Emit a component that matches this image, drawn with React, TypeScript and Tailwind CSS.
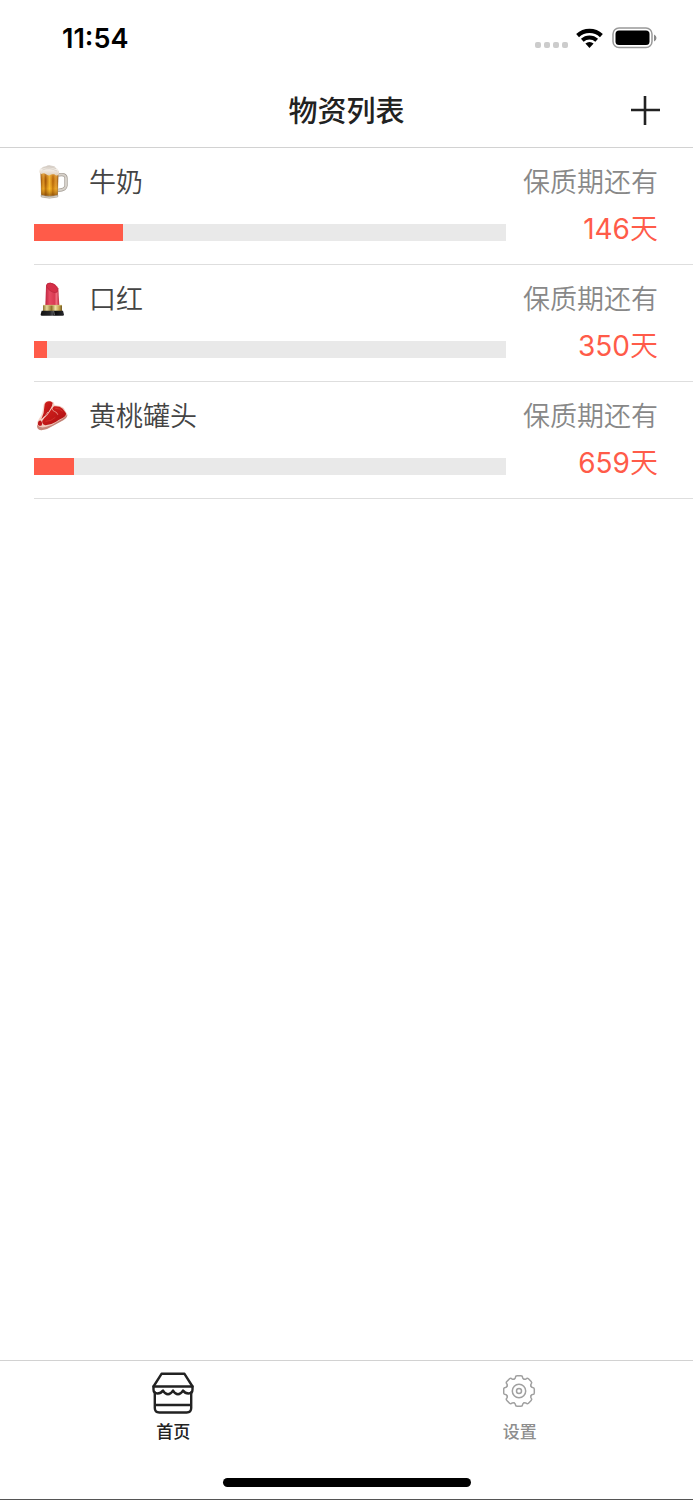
import React from 'react'

function BeerIcon() {
  return (
    <svg viewBox="42 27 114 108" className="h-9 w-[38px] shrink-0" aria-hidden="true">
      <defs>
        <linearGradient id="beer" x1="0" x2="1">
          <stop offset="0" stopColor="#8f4a08" />
          <stop offset=".14" stopColor="#e09a2c" />
          <stop offset=".28" stopColor="#a85a08" />
          <stop offset=".5" stopColor="#f7bb35" />
          <stop offset=".7" stopColor="#c06c0a" />
          <stop offset=".88" stopColor="#e2a03a" />
          <stop offset="1" stopColor="#8a4a10" />
        </linearGradient>
        <linearGradient id="beerShade" x1="0" x2="0" y1="0" y2="1">
          <stop offset="0" stopColor="#ffd98a" stopOpacity=".55" />
          <stop offset=".35" stopColor="#c87410" stopOpacity=".1" />
          <stop offset=".7" stopColor="#ffbe20" stopOpacity=".35" />
          <stop offset="1" stopColor="#6d3906" stopOpacity=".6" />
        </linearGradient>
        <linearGradient id="foam" x1="0" x2="0" y1="0" y2="1">
          <stop offset="0" stopColor="#cfc6be" />
          <stop offset=".4" stopColor="#f3eee8" />
          <stop offset="1" stopColor="#e0cfbc" />
        </linearGradient>
      </defs>
      <path d="M113 60 Q137 55 138 69 V92 Q137 105 114 106" fill="none" stroke="#a39c94" strokeWidth="10" />
      <path d="M113 60 Q137 55 138 69 V92 Q137 105 114 106" fill="none" stroke="#d6d1ca" strokeWidth="6" />
      <path d="M61 48 H116 L114 123 Q88 133 63 123 Z" fill="#c8b8a2" />
      <path d="M62 50 H115 L113 119 Q88 126 64 119 Z" fill="url(#beer)" />
      <path d="M62 50 H115 L113 119 Q88 126 64 119 Z" fill="url(#beerShade)" />
      <path d="M77 62 L78 119 M99 62 L98 119" stroke="#8b4908" strokeWidth="2" opacity=".4" />
      <path d="M63 121 Q88 129 114 121 L113 126 Q88 133 64 126 Z" fill="#e4dccf" stroke="#90877a" strokeWidth="1.5" />
      <path d="M58 50 Q57 42 65 39 Q69 34 78 34 Q84 29 95 32 Q105 32 108 39 Q119 44 117 58 Q110 65 103 58 Q94 56 89 61 Q83 62 77 57 Q72 53 64 57 Q58 55 58 50 Z" fill="url(#foam)" />
      <path d="M65 40 Q87 31 108 41 M67 45 Q88 36 111 48" fill="none" stroke="#c9beb3" strokeWidth="1.5" />
    </svg>
  )
}

function LipstickIcon() {
  return (
    <svg viewBox="42 33 114 108" className="h-9 w-[38px] shrink-0" aria-hidden="true">
      <defs>
        <linearGradient id="stick" x1="0" x2="1">
          <stop offset="0" stopColor="#bd2540" />
          <stop offset=".3" stopColor="#e64a62" />
          <stop offset=".65" stopColor="#d93a52" />
          <stop offset=".8" stopColor="#f06d80" />
          <stop offset="1" stopColor="#b92a3d" />
        </linearGradient>
        <linearGradient id="gold" x1="0" x2="1">
          <stop offset="0" stopColor="#8a7432" />
          <stop offset=".2" stopColor="#e8d79a" />
          <stop offset=".45" stopColor="#90732b" />
          <stop offset=".65" stopColor="#ede1a4" />
          <stop offset=".85" stopColor="#c4a24c" />
          <stop offset="1" stopColor="#715a22" />
        </linearGradient>
        <linearGradient id="base" x1="0" x2="1">
          <stop offset="0" stopColor="#111" />
          <stop offset=".4" stopColor="#252528" />
          <stop offset=".5" stopColor="#4c4c50" />
          <stop offset=".6" stopColor="#08080a" />
          <stop offset="1" stopColor="#29292c" />
        </linearGradient>
      </defs>
      <path d="M76 107 L78 50 Q79 38 91 38 Q108 40 115 55 L118 107 Z" fill="url(#stick)" />
      <path d="M79 48 Q80 38 91 39 Q107 42 113 56 Q115 68 106 68 Q88 66 79 48 Z" fill="#d52f48" stroke="#ab2237" strokeWidth="1.5" />
      <path d="M69 105 H126 V123 H69 Z" fill="url(#gold)" />
      <path d="M69 106 H126" stroke="#d8c47d" strokeWidth="2" />
      <path d="M65 122 H129 L132 134 Q132 137 128 137 H65 Q61 137 62 133 Z" fill="url(#base)" />
      <path d="M101 123 L104 136" stroke="#aaa" strokeWidth="1.5" />
    </svg>
  )
}

function MeatIcon() {
  return (
    <svg viewBox="42 39 114 108" className="h-9 w-[38px] shrink-0" aria-hidden="true">
      <defs>
        <linearGradient id="fat" x1="0" x2="1" y1="0" y2="1">
          <stop offset="0" stopColor="#fae4d9" />
          <stop offset=".7" stopColor="#efc1b4" />
          <stop offset="1" stopColor="#c78579" />
        </linearGradient>
        <linearGradient id="meat" x1="0" x2="1" y1="0" y2="1">
          <stop offset="0" stopColor="#d8241e" />
          <stop offset="1" stopColor="#ab0c11" />
        </linearGradient>
      </defs>
      <path d="M78 49 Q89 44 101 52 L104 61 Q120 60 131 69 L141 86 Q144 96 130 105 L102 121 Q83 133 64 136 Q51 135 51 123 Q50 110 58 100 Q67 88 69 68 Q70 54 78 49 Z" fill="url(#fat)" />
      <path d="M51 120 Q60 130 77 126 Q100 120 117 107 Q138 97 142 88 Q144 97 130 106 L102 121 Q83 134 64 136 Q50 134 51 120 Z" fill="#a8584d" opacity=".6" />
      <path d="M78 52 Q88 45 98 53 Q98 63 91 72 L80 90 Q70 96 64 103 Q73 84 73 66 Q73 56 78 52 Z" fill="url(#meat)" />
      <path d="M102 64 Q118 62 128 71 L138 85 Q139 93 129 98 Q116 104 107 111 Q94 119 80 120 Q70 122 67 114 Q65 107 73 99 Q83 91 88 82 Q94 72 102 64 Z" fill="url(#meat)" />
      <path d="M54 113 Q56 105 63 107 Q69 115 64 122 Q58 124 54 119 Z" fill="#bd1519" />
      <path d="M98 59 Q92 75 103 79 Q111 81 113 88 M68 100 Q78 92 83 82" fill="none" stroke="#f4c5b9" strokeWidth="2" strokeLinecap="round" />
      <path d="M107 70 Q119 69 127 78 M78 109 Q94 109 105 98" fill="none" stroke="#ec6250" strokeWidth="2" strokeLinecap="round" opacity=".5" />
    </svg>
  )
}

function WifiIcon() {
  return (
    <svg viewBox="0 0 28 20" className="h-5 w-7" aria-hidden="true">
      <path d="M1.6 7.6 A17.5 17.5 0 0 1 25.4 7.6" fill="none" stroke="#000" strokeWidth="4.2" />
      <path d="M6.3 12.3 A10.6 10.6 0 0 1 20.7 12.3" fill="none" stroke="#000" strokeWidth="4" />
      <path d="M9.4 15.5 A6 6 0 0 1 17.6 15.5 L13.5 20 Z" />
    </svg>
  )
}

function BatteryIcon() {
  return (
    <svg viewBox="0 0 45 22" className="h-[22px] w-[45px]" aria-hidden="true">
      <rect x="1" y="1" width="39" height="19.5" rx="6" fill="none" stroke="#999" strokeWidth="1.5" />
      <rect x="3.5" y="3.5" width="34" height="14.5" rx="3.5" />
      <path d="M42 7.5 Q44.5 8.5 44.5 11 Q44.5 13.5 42 14.5 Z" fill="#888" />
    </svg>
  )
}

function ShopIcon() {
  return (
    <svg viewBox="0 0 42 42" className="h-[42px] w-[42px]" fill="none" stroke="#222" strokeWidth="2.4" strokeLinecap="round" strokeLinejoin="round" aria-hidden="true">
      <path d="M9.5 1.8 H32.5 L40.5 14.5 V17.5 Q40.5 21.5 36.5 21.5 Q33 21.5 31 18.5 Q28.8 22.3 26 22.3 Q23 22.3 21 18.5 Q18.8 22.3 16 22.3 Q13 22.3 11 18.5 Q9 21.5 5.5 21.5 Q1.5 21.5 1.5 17.5 V14.5 Z" />
      <path d="M1.5 14.5 H40.5 M2.8 20.5 V36 Q2.8 40.5 7.3 40.5 H34.7 Q39.2 40.5 39.2 36 V20.5 M2.8 33 H39.2" />
    </svg>
  )
}

const TOOTH_ANGLES = [0, 45, 90, 135, 180, 225, 270, 315]

function GearIcon() {
  return (
    <svg viewBox="-16 -17 34 34" className="h-[34px] w-[34px]" fill="none" stroke="#a0a0a0" strokeWidth="1.5" strokeLinecap="round" aria-hidden="true">
      {TOOTH_ANGLES.map((angle) => (
        <path
          key={angle}
          transform={`rotate(${angle})`}
          d="M-4.9 -11.9 Q-3.7 -12.4 -3.6 -13.6 Q-3.5 -15.3 -1.9 -15.3 H1.9 Q3.5 -15.3 3.6 -13.6 Q3.7 -12.4 4.9 -11.9"
        />
      ))}
      <circle r="6.7" />
      <circle r="2.5" />
    </svg>
  )
}

const SUPPLIES = [
  { name: '牛奶', days: 146, used: 18.9, Icon: BeerIcon },
  { name: '口红', days: 350, used: 2.8, Icon: LipstickIcon },
  { name: '黄桃罐头', days: 659, used: 8.5, Icon: MeatIcon },
]

export default function App() {
  return (
    <div className="flex min-h-screen flex-col border-b border-[#555] bg-white font-['Inter','Noto_Sans_CJK_SC',sans-serif] text-[#222]">
      <header className="border-b border-[#d2d2d2]">
        <div className="flex h-[76px] items-center justify-between pr-9 pl-[62px] text-black">
          <time className="pt-[2px] text-[27px] leading-8 font-semibold">11:54</time>
          <div className="flex items-center gap-2">
            <div className="flex gap-[3px] pt-[14px]">
              <span className="size-[6px] rounded-xs bg-[#ccc]" />
              <span className="size-[6px] rounded-xs bg-[#ccc]" />
              <span className="size-[6px] rounded-xs bg-[#ccc]" />
              <span className="size-[6px] rounded-xs bg-[#ccc]" />
            </div>
            <WifiIcon />
            <BatteryIcon />
          </div>
        </div>
        <div className="grid h-[71px] grid-cols-[1fr_auto_1fr] items-center px-8">
          <h1 className="col-start-2 text-[29px] leading-10 font-medium">物资列表</h1>
          <button type="button" aria-label="添加" className="justify-self-end">
            <svg viewBox="0 0 32 32" className="size-8" stroke="#222" strokeWidth="2.6" aria-hidden="true">
              <path d="M2 14 H31 M16 0 V29" />
            </svg>
          </button>
        </div>
      </header>

      <main className="flex-1">
        <ul>
          {SUPPLIES.map(({ name, days, used, Icon }) => (
            <li key={name} className="ml-[34px] flex border-b border-[#dedede] pt-4 pr-[35px] pb-[23px]">
              <div className="flex-1">
                <div className="flex items-start gap-[17px]">
                  <Icon />
                  <h2 className="text-[27px] leading-[38px] font-[350] text-[#444]">{name}</h2>
                </div>
                <div className="mt-[22px] h-[17px] bg-[#e9e9e9]">
                  <div className="h-full bg-[#ff5b49]" style={{ width: `${used}%` }} />
                </div>
              </div>
              <div className="flex w-[152px] flex-col gap-2 text-right text-[27px] leading-[38px]">
                <p className="font-[350] text-[#888]">保质期还有</p>
                <p className="-mb-5 text-[28px] text-[#ff5b49]">
                  {days}
                  <span className="font-[350]">天</span>
                </p>
              </div>
            </li>
          ))}
        </ul>
      </main>

      <footer className="border-t border-[#d2d2d2]">
        <nav className="grid grid-cols-2 text-[17px] leading-6 font-medium">
          <a href="#home" aria-current="page" className="flex flex-col items-center pt-[11px]">
            <ShopIcon />
            <span className="mt-[6px]">首页</span>
          </a>
          <a href="#settings" className="flex flex-col items-center pt-[11px] text-[#8e8e8e]">
            <span className="flex h-[42px] items-start pt-[2px]">
              <GearIcon />
            </span>
            <span className="mt-[6px]">设置</span>
          </a>
        </nav>
        <div className="mx-auto mt-[34px] mb-3 h-[9px] w-[248px] rounded-full bg-black" />
      </footer>
    </div>
  )
}
